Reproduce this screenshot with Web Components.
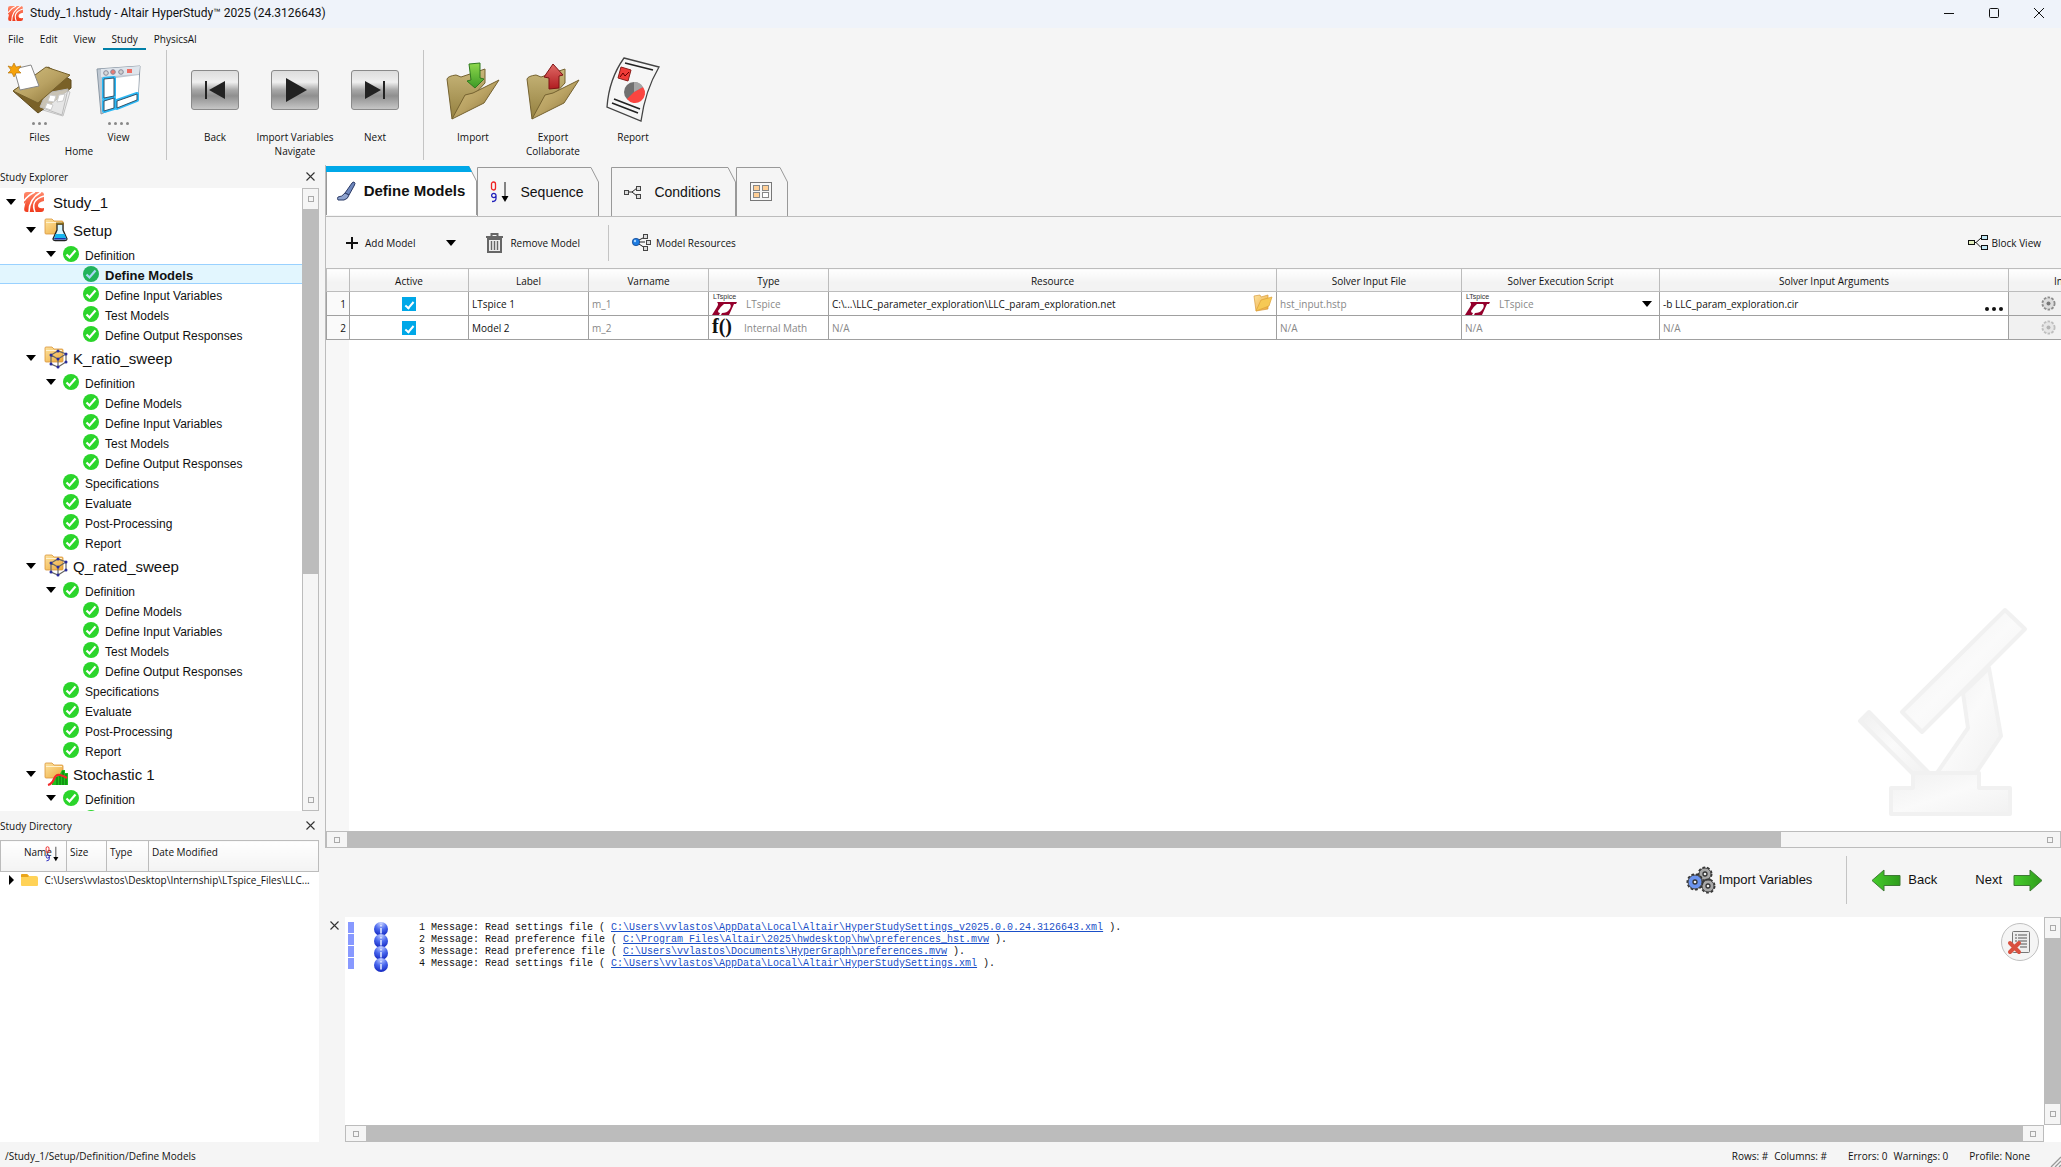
<!DOCTYPE html>
<html lang="en">
<head>
<meta charset="utf-8">
<title>Study_1.hstudy - Altair HyperStudy</title>
<style>
  html, body { height: 100%; margin: 0; }
  body {
    --bg: #f5f5f5;
    --line: #bcbcbc;
    --grid: #a0a0a0;
    --accent: #00a8e8;
    --ui: "Open Sans", "Segoe UI", sans-serif;
    --arial: "Liberation Sans", Arial, sans-serif;
    background: var(--bg);
    color: #111;
    font: 10px/14px var(--ui);
    overflow: hidden;
  }
</style>
</head>
<body>
<hs-app></hs-app>

<template id="app-template">
  <style>
    :host { display: flex; flex-direction: column; height: 100%; }
    main { flex: 1; display: flex; gap: 6px; min-height: 0; }
    aside { width: 319px; flex: none; display: flex; flex-direction: column; }
    section { flex: 1; min-width: 0; display: flex; flex-direction: column; }
    .tree { --head: 23px; flex: 646; }
    .dir { --head: 29px; flex: 331; }
    .work { flex: 1; min-height: 0; display: flex; flex-direction: column; border-left: 1px solid var(--line); }
  </style>
  <hs-titlebar>Study_1.hstudy - Altair HyperStudy™ 2025 (24.3126643)</hs-titlebar>
  <hs-menubar></hs-menubar>
  <hs-ribbon></hs-ribbon>
  <main>
    <aside>
      <hs-panel class="tree" heading="Study Explorer"><hs-tree></hs-tree></hs-panel>
      <hs-panel class="dir" heading="Study Directory"><hs-directory></hs-directory></hs-panel>
    </aside>
    <section>
      <div class="work">
        <hs-tabs></hs-tabs>
        <hs-toolbar></hs-toolbar>
        <hs-models></hs-models>
        <hs-scrollbar thumb="1434" rest="259"></hs-scrollbar>
      </div>
      <hs-nav></hs-nav>
      <hs-log></hs-log>
    </section>
  </main>
  <hs-status></hs-status>
</template>

<script>
// Gradients that the icons share
const defs = `
  <linearGradient id="gold" x1="0" y1="0" x2="1" y2="1"><stop offset="0" stop-color="#d3c080"/><stop offset=".5" stop-color="#b9a263"/><stop offset="1" stop-color="#846c30"/></linearGradient>
  <linearGradient id="gold2" x1="0" y1="0" x2="0" y2="1"><stop offset="0" stop-color="#c8b67a"/><stop offset="1" stop-color="#94803f"/></linearGradient>
  <linearGradient id="yel" x1="0" y1="0" x2="1" y2="1"><stop offset="0" stop-color="#fde3a0"/><stop offset="1" stop-color="#eda93a"/></linearGradient>
  <linearGradient id="red" x1="0" y1="0" x2="0" y2="1"><stop offset="0" stop-color="#e06a66"/><stop offset="1" stop-color="#b01c20"/></linearGradient>
  <linearGradient id="green" x1="0" y1="0" x2="0" y2="1"><stop offset="0" stop-color="#8fd84c"/><stop offset="1" stop-color="#3c9a26"/></linearGradient>
  <linearGradient id="go" x1="0" y1="0" x2="1" y2="0"><stop offset="0" stop-color="#46cc2c"/><stop offset="1" stop-color="#2f9c1c"/></linearGradient>
  <linearGradient id="key" x1="0" y1="0" x2="0" y2="1"><stop offset="0" stop-color="#dcdcdc"/><stop offset=".3" stop-color="#efefef"/><stop offset=".5" stop-color="#a8a8a8"/><stop offset=".65" stop-color="#8f8f8f"/><stop offset="1" stop-color="#c8c8c8"/></linearGradient>
  <radialGradient id="ball" cx=".5" cy=".1" r=".9"><stop offset="0" stop-color="#c5d0ff"/><stop offset=".5" stop-color="#4a68ee"/><stop offset="1" stop-color="#1226c0"/></radialGradient>
  <linearGradient id="altair" x1="0" y1="0" x2="0" y2="1"><stop offset="0" stop-color="#ff8a6c"/><stop offset="1" stop-color="#f03a1c"/></linearGradient>
  <linearGradient id="wm" x1="0" y1="0" x2="1" y2="1"><stop offset="0" stop-color="#f0f0f0"/><stop offset=".5" stop-color="#fafafa"/><stop offset="1" stop-color="#f1f1f1"/></linearGradient>`;

const folder = `<path d="M1 2q0-1 1-1h6l2 2h8q1 0 1 1v11q0 1-1 1H2q-1 0-1-1z" fill="url(#yel)" stroke="#d9953a" stroke-width=".8"/><path d="M2 4.500h16" stroke="#fff2cf"/>`;
const lattice = `<g fill="none" stroke="#666" stroke-width="1.200"><path d="M7 9l7-4 8 3-8 5zM7 9v9l7 3 8-5V8M14 13v8"/></g><g fill="#2a2c9c"><circle cx="7" cy="9" r="1.500"/><circle cx="14" cy="5" r="1.500"/><circle cx="22" cy="8" r="1.500"/><circle cx="14" cy="13" r="1.500"/><circle cx="7" cy="18" r="1.500"/><circle cx="14" cy="21" r="1.500"/><circle cx="22" cy="16" r="1.500"/></g>`;
const openFolder = `<path d="M1 20q1-3 9-4l5 2 24-8v14L6 60z" fill="url(#gold2)" stroke="#756230"/><path d="M6 60L19 36l8-2 26-13-15 23z" fill="url(#gold)" stroke="#756230"/>`;
const gear = (cx, cy, r, fill) => `<circle cx="${cx}" cy="${cy}" r="${r}" fill="none" stroke="#333" stroke-width="3" stroke-dasharray="2.500 1.700"/><circle cx="${cx}" cy="${cy}" r="${r}" fill="${fill}" stroke="#444"/><circle cx="${cx}" cy="${cy}" r="2" fill="#eee" stroke="#333" stroke-width="1.300"/>`;
const key = d => `<rect x=".5" y=".5" width="47" height="39" rx="2.500" fill="url(#key)" stroke="#8a8a8a"/>${d}`;

// name: [width, height, markup]
const icons = {
  altair: [20, 20, `<path d="M3 0h14q3 0 3 3v14q0 3-3 3H3q-3 0-3-3V3q0-3 3-3z" fill="url(#altair)"/><g fill="none" stroke="#fff" stroke-width="1.500"><path d="M0 9Q4 3 11 0"/><path d="M5 20Q5 7 17 0"/><path d="M11 20Q6 8 20 4"/></g><path d="M0 20V12l1.500-2Q0 16 0 20zM20 9q-6 1-6 4.500t6 2.500z" fill="#fff"/>`],
  files: [64, 54, `<path d="M36 22l26 7-7 24-27-8z" fill="#ececec" stroke="#c2c2c2"/><path d="M5 28L30 50 44 40 63 25V17L40 4z" fill="#7a6128" stroke="#5e4a1c"/><path d="M38 30l22-4-6 26-22-8z" fill="#e4e4e4" fill-opacity=".75" stroke="#bbb"/><path d="M42 32l6 1-2 6-6-1zm9 0l6-1-2 7-6 1zM39 40l6 2-2 5-6-2z" fill="#fff" stroke="#ccc"/><path d="M5 28L38 4l24 8-32 28z" fill="url(#gold)" stroke="#75602c"/><path d="M6 6l17-4 8 21-19 4z" fill="#fff" stroke="#888"/><path d="M6 0l2 4 5-1-3 4 3 3-5 0-2 4-2-4-4 0 3-3-3-4 4 1z" fill="#f7a30a" stroke="#b06c00" stroke-width=".6"/>`],
  view: [46, 50, `<path d="M1 4l43-3-2 32L5 49z" fill="#bfc8d2" stroke="#8b98a5"/><path d="M5 4l39-3-1 8-38 3z" fill="#dfe5ec"/><g stroke="#889"><circle cx="10" cy="8" r="2.300" fill="#d8d8d8"/><circle cx="17" cy="7" r="2.300" fill="#f07a70"/><circle cx="25" cy="7" r="2.300" fill="#cfcfcf"/></g><path d="M31 4h5v4h-5z" fill="#f06c62"/><path d="M20 13l23-3-1 22-34 14-1-32z" fill="#fff"/><g fill="#fff" stroke="#2bb8f5" stroke-width="4" stroke-linejoin="round"><path d="M8 14l10-1v18l-10 2zM8 36l10-3v10l-10 3zM21 36l20-7v6l-20 8z"/></g><g fill="#fff" stroke="#31536b"><path d="M8 14l10-1v18l-10 2zM8 36l10-3v10l-10 3zM21 36l20-7v6l-20 8z"/></g>`],
  back: [48, 40, key('<path d="M34 11v18L18 20z" fill="#222"/><path d="M15 11v18" stroke="#222" stroke-width="2"/>')],
  play: [48, 40, key('<path d="M15 8v24l21-12z" fill="#222"/>')],
  next: [48, 40, key('<path d="M14 11v18l16-9z" fill="#222"/><path d="M33 11v18" stroke="#222" stroke-width="2"/>')],
  import: [54, 62, `${openFolder}<path d="M23 5l11-1v15l4 1-9 9-8-7 4-1z" fill="url(#green)" stroke="#2f7a1e"/>`],
  export: [54, 62, `${openFolder}<path d="M27 5l10 11-4 1v12l-10 1V19l-5-1z" fill="url(#red)" stroke="#7d1214"/>`],
  report: [54, 66, `<path d="M18 1l35 9q-14 24-18 54L1 50Q3 22 18 1z" fill="#f6f6f6" stroke="#444" stroke-width="1.300"/><path d="M19 6l28 7M8 42l26 10M6 46l26 10" stroke="#222" stroke-width="1.600"/><path d="M15 10l10 3-3 11-10-3z" fill="#f03c38" stroke="#8b1d1b"/><path d="M14 20l3-4 2 3 4-4" fill="none" stroke="#600"/><circle cx="28" cy="35" r="10" fill="#707070"/><path d="M28 35l9-5a10 10 0 0 1-16 12z" fill="#fb4540"/><path d="M28 35V25a10 10 0 0 1 9 5z" fill="#a5a5a5"/>`],
  setup: [24, 24, `${folder}<path d="M13 6h6v6l4 9q0 1.500-2 1.500H11q-2 0-2-1.500l4-9z" fill="#d8f6ff" stroke="#222" stroke-width="1.300"/><path d="M11.500 16h9l2 5H10z" fill="#16b4ee"/><path d="M10.500 20h11l.5 1.500H10z" fill="#1c31a8"/><path d="M12 5.500h8" stroke="#8a6d1c" stroke-width="2"/>`],
  sweep: [24, 24, folder + lattice],
  stochastic: [24, 24, `${folder}<path d="M8 23v-4l4-4 4-3 2-4h3v3h3v12z" fill="#1fc01f"/><path d="M13 23v-8m3 8V12m3 11V9m3 14V12" stroke="#0b6e0b"/><path d="M4 23q4-1 6-6t6-4 7 3" fill="none" stroke="#f02a2a" stroke-width="2.200"/>`],
  ok: [16, 16, `<circle cx="8" cy="8" r="8" fill="#2bd52b"/><path d="M3.500 8.500l3 3 6-7" fill="none" stroke="#fff" stroke-width="2.200"/>`],
  oksel: [16, 16, `<circle cx="8" cy="8" r="8" fill="#21b35c"/><path d="M3.500 8.500l3 3 6-7" fill="none" stroke="#a9d6f5" stroke-width="2.200"/>`],
  down: [10, 6, '<path d="M0 0h10L5 6z" fill="#000"/>'],
  right: [5, 10, '<path d="M0 0v10l5-5z" fill="#000"/>'],
  close: [9, 9, '<path d="M.5.5l8 8m0-8l-8 8" stroke="#333" stroke-width="1.100"/>'],
  min: [10, 10, '<path d="M0 5.500h10" stroke="#111"/>'],
  max: [10, 10, '<rect x=".5" y=".5" width="9" height="9" rx="1" fill="none" stroke="#111"/>'],
  winclose: [10, 10, '<path d="M0 0l10 10M10 0L0 10" stroke="#111"/>'],
  brush: [20, 20, '<path d="M18 1q2 1 0 4l-5 9-4-2 7-10q1-1 2-1z" fill="#6e87bd" stroke="#2b3a66"/><path d="M9 12l4 2q-1 4-5 5H2q-1-2 0-3 4 0 7-4z" fill="#8ea3cf" stroke="#2b3a66"/>'],
  sort: [18, 22, '<g fill="none" stroke-width="1.300"><rect x="1.500" y="1" width="4" height="8" rx="2" stroke="#e22"/><path d="M6 14.500a2.200 2.200 0 1 1-4.400 0a2.200 2.200 0 1 1 4.400 0v3q0 3-4 3" stroke="#22b"/></g><path d="M15 1v16" stroke="#111"/><path d="M11.500 15h7L15 21z" fill="#000"/>'],
  cond: [18, 14, '<path d="M4 7h4l5-4M8 7l5 4" fill="none" stroke="#222"/><g fill="#ddd" stroke="#444"><rect x=".5" y="5.500" width="4" height="4"/><rect x="12.500" y="1.500" width="4" height="4"/><rect x="12.500" y="9.500" width="4" height="4"/></g>'],
  grid: [22, 19, '<rect x=".5" y=".5" width="21" height="18" fill="#f7f7f7" stroke="#777"/><g fill="#ffcf96" stroke="#888"><rect x="3.500" y="3.500" width="6" height="5"/><rect x="12.500" y="3.500" width="6" height="5"/><rect x="3.500" y="10.500" width="6" height="5"/><rect x="12.500" y="10.500" width="6" height="5" fill="#fff"/></g>'],
  plus: [12, 12, '<path d="M6 0v12M0 6h12" stroke="#111" stroke-width="2"/>'],
  trash: [17, 20, '<path d="M2 6h13v13H2z" fill="#ededed" stroke="#666" stroke-width="2"/><path d="M0 4h17M5.500 4V1h6v3" fill="none" stroke="#666" stroke-width="2"/><path d="M5.500 8v9m3-9v9m3-9v9" stroke="#666" stroke-width="1.400"/>'],
  resources: [19, 17, '<path d="M5 8h8M7 6l6-3M7 10l6 4" stroke="#222"/><g fill="#ddd" stroke="#444"><rect x="11.500" y=".5" width="4" height="4"/><rect x="14.500" y="6.500" width="4" height="4"/><rect x="11.500" y="12.500" width="4" height="4"/></g><circle cx="4" cy="8" r="3.700" fill="#1d7be0" stroke="#0d3f8a" stroke-width=".7"/><circle cx="3" cy="7" r="1.200" fill="#a8d4ff"/>'],
  block: [20, 15, '<path d="M6 7.500h2l5-4.500M8 7.500l5 5" fill="none" stroke="#111"/><rect x=".5" y="5.500" width="6" height="4" fill="#e3efbd" stroke="#111"/><rect x="13.500" y=".5" width="6" height="4" fill="#c2e8f5" stroke="#111"/><rect x="13.500" y="10.500" width="6" height="4" fill="#c2e8f5" stroke="#111"/>'],
  ltspice: [26, 23, '<text x="1" y="7" font-family="Liberation Sans" font-size="7" fill="#333">LTspice</text><path d="M5 10h20l-1 2h-2l-5 11H9l1-2q5 0 7-3 3-4 1-6h-6q-4 3-6 7 0 2 2 2l-1 2H0l5-8q2-3 0-5z" fill="#94002c"/>'],
  fx: [24, 22, '<text x="0" y="16" font-family="Liberation Serif" font-weight="bold" font-size="20" fill="#111">f()</text>'],
  openyellow: [20, 19, '<path d="M1 3l6-1 1 2 7-2v14L3 18z" fill="url(#yel)" stroke="#d89b3c" stroke-width=".7"/><path d="M3 18L8 7l11-3-3 9z" fill="#f6c955" stroke="#dda038" stroke-width=".7"/>'],
  dir: [17, 14, '<path d="M0 3q0-2 2-2h4l2 2h7q2 0 2 2v7q0 1-1 1H1q-1 0-1-1z" fill="#ffd257"/><path d="M0 4V2q0-1 1-1h5l2 2-1 1z" fill="#eaa51b"/>'],
  cog: [15, 15, '<circle cx="7.500" cy="7.500" r="6" fill="#d6d6d6" stroke="#8d8d8d" stroke-width="2" stroke-dasharray="2.500 1.300"/><circle cx="7.500" cy="7.500" r="5" fill="#ddd"/><circle cx="7.500" cy="7.500" r="2" fill="#777"/>'],
  gears: [30, 29, gear(19, 8, 6, '#a8a8a8') + gear(22, 20, 6, '#a8a8a8') + gear(9, 16, 7, '#6a93ee')],
  left: [30, 23, '<path d="M1 11.500L13 1v5.500h16v10H13V22z" fill="url(#go)" stroke="#3f7a35"/>'],
  fwd: [30, 23, '<path d="M29 11.500L17 1v5.500H1v10h16V22z" fill="url(#go)" stroke="#3f7a35"/>'],
  info: [14, 14, '<circle cx="7" cy="7" r="7" fill="url(#ball)"/><path d="M7 3v1.500M7 6v5.500" stroke="#dfe6ff" stroke-width="1.600"/>'],
  clear: [22, 22, '<rect x="4.500" y=".5" width="17" height="21" rx="1" fill="#eee" stroke="#777"/><path d="M7 4h2m1 0h9M7 7h2m1 0h9M7 10h2m1 0h9M10 13h9M12 16h7" stroke="#555"/><path d="M2 12l9 9m0-9l-9 9" stroke="#d9503f" stroke-width="4" stroke-linecap="round"/>'],
  grip: [10, 10, '<path d="M0 10L10 0M4 10l6-6M8 10l2-2" stroke="#999" stroke-width="1.300"/>'],
  microscope: [170, 210, '<g fill="url(#wm)" stroke="#f1f1f1" stroke-width="4" stroke-linejoin="round"><path d="M131 61l12 68-25 37H79l31-45-5-35z"/><path d="M11 105l61 62H55L2 114z"/><path d="M147 3l20 19L64 125l-20-20z"/><path d="M33 181h22v-15h66v15h31v26H33z"/></g>']
};

class HsIcon extends HTMLElement {
  connectedCallback() {
    const [w, h, body] = icons[this.getAttribute('name')];
    const size = this.getAttribute('size') || w;
    this.attachShadow({ mode: 'open' }).innerHTML = `
      <style>:host { display: inline-flex; flex: none; } svg { display: block; overflow: visible; }</style>
      <svg width="${size}" height="${Math.round(size * h / w)}" viewBox="0 0 ${w} ${h}" aria-hidden="true">
        <defs>${defs}</defs>${body}
      </svg>`;
  }
}

// Base for the elements whose markup is a fixed string
class HsElement extends HTMLElement {
  connectedCallback() {
    this.attachShadow({ mode: 'open' }).innerHTML = `
      <style>
        :host, * { box-sizing: border-box; }
        button, select { font: inherit; color: inherit; background: none; border: 0; margin: 0; padding: 0; }
      </style>${this.render()}`;
  }
}

class HsTitlebar extends HsElement {
  render() {
    return `
      <style>
        :host { display: flex; align-items: center; flex: none; height: 28px; padding: 0 17px 2px 8px; gap: 7px; background: #eff3fa; font: 12px/16px Roboto, sans-serif; }
        .title { flex: 1; }
        .win { display: flex; gap: 35px; }
        button { display: flex; }
      </style>
      <hs-icon name="altair" size="15"></hs-icon>
      <span class="title"><slot></slot></span>
      <div class="win">
        <button aria-label="Minimize"><hs-icon name="min"></hs-icon></button>
        <button aria-label="Maximize"><hs-icon name="max"></hs-icon></button>
        <button aria-label="Close"><hs-icon name="winclose"></hs-icon></button>
      </div>`;
  }
}

class HsMenubar extends HsElement {
  render() {
    const items = ['File', 'Edit', 'View', 'Study', 'PhysicsAI'];
    return `
      <style>
        :host { display: flex; flex: none; height: 22px; }
        button { padding: 2px 8px 0; border-bottom: 2px solid transparent; }
        button.on { border-color: #0080a8; }
      </style>
      ${items.map(t => `<button class="${t === 'Study' ? 'on' : ''}">${t}</button>`).join('')}`;
  }
}

class HsRibbon extends HsElement {
  render() {
    const group = (name, items) => `
      <div class="group ${name.toLowerCase()}"><div class="items">${items.map(([icon, text, dots]) => `
        <button><span class="pic"><hs-icon name="${icon}"></hs-icon></span><span class="dots">${'<i></i>'.repeat(dots || 0)}</span>${text}</button>`).join('')}
      </div>${name}</div>`;
    return `
      <style>
        :host { display: flex; flex: none; height: 115px; }
        .group { display: flex; flex-direction: column; align-items: center; height: 110px; padding: 0 8px; border-right: 1px solid #c4c4c4; }
        .home { padding: 0 8px 0 0; }
        .home button { width: 79px; }
        .collaborate { border: 0; padding: 0 9px; }
        .items { display: flex; }
        button { width: 80px; display: flex; flex-direction: column; align-items: center; }
        .pic { height: 72px; display: flex; align-items: center; padding-top: 8px; }
        .dots { height: 8px; display: flex; gap: 3px; }
        i { width: 3px; height: 3px; border-radius: 50%; background: #888; }
      </style>
      ${group('Home', [['files', 'Files', 3], ['view', 'View', 4]])}
      ${group('Navigate', [['back', 'Back'], ['play', 'Import Variables'], ['next', 'Next']])}
      ${group('Collaborate', [['import', 'Import'], ['export', 'Export'], ['report', 'Report']])}`;
  }
}

class HsPanel extends HsElement {
  render() {
    return `
      <style>
        :host { display: flex; flex-direction: column; min-height: 0; }
        header { display: flex; align-items: center; justify-content: space-between; height: var(--head); flex: none; }
        button { display: flex; padding: 4px; }
        .body { flex: 1; min-height: 0; overflow: hidden; background: #fff; }
      </style>
      <header>${this.getAttribute('heading')}<button aria-label="Close"><hs-icon name="close"></hs-icon></button></header>
      <div class="body"><slot></slot></div>`;
  }
}

class HsScrollbar extends HsElement {
  render() {
    const v = this.hasAttribute('vertical');
    return `
      <style>
        :host { display: flex; flex: none; flex-direction: ${v ? 'column' : 'row'}; ${v ? 'width' : 'height'}: 17px; border: 1px solid var(--line); background: var(--bg); }
        button { flex: none; width: ${v ? 'auto' : '20px'}; height: ${v ? '20px' : 'auto'}; display: flex; align-items: center; justify-content: center; }
        button::before { content: ""; width: 6px; height: 6px; border: 1px solid #aaa; box-sizing: border-box; }
        .thumb { flex: ${this.getAttribute('thumb') || 1}; background: var(--line); }
        .rest { flex: ${this.getAttribute('rest') || 0}; }
      </style>
      <button aria-label="Scroll back"></button><div class="thumb"></div><div class="rest"></div><button aria-label="Scroll on"></button>`;
  }
}

const steps = ['Define Models', 'Define Input Variables', 'Test Models', 'Define Output Responses'];
const sweep = name => [
  [1, 'sweep', name, true], [2, 'ok', 'Definition', true], ...steps.map(s => [3, 'ok', s]),
  ...['Specifications', 'Evaluate', 'Post-Processing', 'Report'].map(s => [2, 'ok', s])
];
const nodes = [
  [0, 'altair', 'Study_1', true],
  [1, 'setup', 'Setup', true], [2, 'ok', 'Definition', true], ...steps.map((s, i) => [3, i ? 'ok' : 'oksel', s]),
  ...sweep('K_ratio_sweep'),
  ...sweep('Q_rated_sweep'),
  [1, 'stochastic', 'Stochastic 1', true], [2, 'ok', 'Definition', true], [3, 'ok', '']
];

class HsTree extends HsElement {
  render() {
    return `
      <style>
        :host { display: flex; height: 100%; overflow: hidden; }
        ul { flex: 1; margin: 0; padding: 0; list-style: none; font: 12px/16px var(--arial); }
        li { display: flex; align-items: center; height: 20px; white-space: nowrap; padding-left: calc(6px + var(--level) * 20px); }
        .arrow { width: 10px; display: flex; }
        .pic { display: flex; width: 29px; padding-left: 7px; }
        .label { padding-top: 3px; }
        .top { height: 28px; font-size: 15px; }
        .top .pic { width: 37px; padding-left: 8px; }
        .top .label { padding-top: 2px; }
        .selected { font-weight: bold; font-size: 13px; background: #e2f6fe; border: solid #99d1ff; border-width: 1px 0; }
      </style>
      <ul role="tree">${nodes.map(([level, icon, text, open]) => `
        <li role="treeitem" style="--level:${level}" class="${level < 2 ? 'top' : ''} ${icon === 'oksel' ? 'selected' : ''}">
          <span class="arrow">${open ? '<hs-icon name="down"></hs-icon>' : ''}</span>
          <span class="pic"><hs-icon name="${icon}"></hs-icon></span><span class="label">${text}</span>
        </li>`).join('')}
      </ul>
      <hs-scrollbar vertical thumb="365" rest="216"></hs-scrollbar>`;
  }
}

class HsDirectory extends HsElement {
  render() {
    return `
      <style>
        :host { display: block; }
        table { width: 100%; border-collapse: collapse; table-layout: fixed; }
        th { height: 31px; padding: 0 0 9px 3px; text-align: left; font-weight: normal; border: 1px solid var(--line); background: linear-gradient(#fff, #f3f3f3); }
        .name { width: 66px; padding-left: 23px; }
        .size { width: 40px; }
        .type { width: 42px; }
        .sortable { display: flex; align-items: center; height: 14px; }
        .sortable hs-icon { margin-left: -7px; padding-top: 4px; }
        td { height: 16px; padding: 0; }
        .path { display: flex; align-items: center; gap: 7px; padding: 0 8px; white-space: nowrap; }
      </style>
      <table>
        <tr><th class="name"><span class="sortable">Name<hs-icon name="sort" size="13"></hs-icon></span></th><th class="size">Size</th><th class="type">Type</th><th>Date Modified</th></tr>
        <tr><td colspan="4"><span class="path"><hs-icon name="right"></hs-icon><hs-icon name="dir"></hs-icon><span>C:\\Users\\vvlastos\\Desktop\\Internship\\LTspice_Files\\LLC...</span></span></td></tr>
      </table>`;
  }
}

class HsTabs extends HsElement {
  render() {
    const tab = (cls, w, icon, text) => `
      <button role="tab" class="${cls}" style="width:${w}px" aria-label="${text || 'Grid'}">
        <svg class="edge" viewBox="0 0 ${w} 49" width="${w}" height="49"><path d="M.5 49V.5H${w - 8}L${w - 0.5} 15V49"/>${cls === 'on' ? `<path class="bar" d="M0 0H${w - 8}L${w - 5} 6H0z"/>` : ''}</svg>
        <hs-icon name="${icon}"></hs-icon>${text ? `<span>${text}</span>` : ''}
      </button>`;
    return `
      <style>
        :host { display: flex; align-items: flex-end; flex: none; height: 52px; border-bottom: 1px solid var(--line); }
        button { position: relative; display: flex; align-items: center; justify-content: center; gap: 12px; height: 49px; padding-right: 2px; font: 14px/16px var(--arial); }
        .edge { position: absolute; inset: 0; z-index: -1; fill: var(--bg); stroke: #999; }
        .on { height: 51px; gap: 8px; font-weight: bold; font-size: 15px; }
        .on .edge { fill: #fff; height: 51px; }
        .bar { fill: var(--accent); stroke: none; }
        .gap { margin-left: 12px; }
      </style>
      ${tab('on', 151, 'brush', 'Define Models')}
      ${tab('', 122, 'sort', 'Sequence')}
      ${tab('gap', 125, 'cond', 'Conditions')}
      ${tab('', 52, 'grid', '')}`;
  }
}

class HsToolbar extends HsElement {
  render() {
    return `
      <style>
        :host { display: flex; align-items: center; flex: none; height: 51px; padding: 0 20px; }
        button { display: flex; align-items: center; gap: 7px; }
        .more { padding: 0 30px 0 31px; }
        .split { height: 36px; width: 1px; margin: 0 23px 0 28px; background: #c4c4c4; }
        .model { gap: 5px; }
        .end { margin-left: auto; gap: 4px; }
      </style>
      <button><hs-icon name="plus"></hs-icon>Add Model</button>
      <button class="more" aria-label="More models"><hs-icon name="down"></hs-icon></button>
      <button><hs-icon name="trash"></hs-icon>Remove Model</button>
      <div class="split"></div>
      <button class="model"><hs-icon name="resources"></hs-icon>Model Resources</button>
      <button class="end"><hs-icon name="block"></hs-icon>Block View</button>`;
  }
}

class HsModels extends HsElement {
  render() {
    const cols = [['Active', 119], ['Label', 120], ['Varname', 120], ['Type', 120], ['Resource', 448], ['Solver Input File', 185], ['Solver Execution Script', 198], ['Solver Input Arguments', 349], ['In', 100]];
    return `
      <style>
        :host { flex: 1; min-height: 0; overflow: hidden; display: flex; flex-direction: column; background: linear-gradient(90deg, #f7f7f7 23px, #fff 23px); }
        table { width: 1782px; flex: none; border-collapse: collapse; table-layout: fixed; background: #fff; }
        th, td { padding: 0 3px; border: 1px solid var(--grid); white-space: nowrap; font-weight: normal; }
        thead th { height: 23px; padding-top: 1px; border-color: var(--line); background: linear-gradient(#fff, #f3f3f3 60%); }
        tbody th { background: #fafafa; text-align: right; }
        td { height: 24px; }
        .dim { color: #888; }
        .check { text-align: center; }
        input { appearance: none; width: 14px; height: 14px; margin: 0; background: var(--accent); vertical-align: middle; display: inline-grid; place-items: center; }
        input::before { content: ""; width: 3px; height: 7px; border: solid #fff; border-width: 0 2px 2px 0; transform: rotate(40deg); box-sizing: content-box; }
        .cell { display: flex; align-items: center; gap: 8px; height: 23px; }
        .cell.apart { justify-content: space-between; }
        select { flex: 1; appearance: none; }
        .drop { padding-right: 4px; }
        .tool { padding: 0 8px 0 0; background: #f1f1f1; text-align: center; }
        .tool button { display: flex; width: 100%; padding-left: 32px; }
        .faded { opacity: .5; }
        .dots { align-self: flex-end; display: flex; gap: 3px; padding: 0 2px 4px; }
        .dots i { width: 4px; height: 4px; border-radius: 50%; background: #111; }
        .watermark { flex: 1; min-height: 0; display: flex; justify-content: flex-end; align-items: flex-end; padding: 0 33px 14px; }
      </style>
      <table>
        <colgroup><col style="width:23px">${cols.map(c => `<col style="width:${c[1]}px">`).join('')}</colgroup>
        <thead><tr><th></th>${cols.map(c => `<th scope="col">${c[0]}</th>`).join('')}</tr></thead>
        <tbody>
          <tr>
            <th scope="row">1</th>
            <td class="check"><input type="checkbox" checked aria-label="LTspice 1 active"></td>
            <td>LTspice 1</td><td class="dim">m_1</td>
            <td class="dim"><span class="cell"><hs-icon name="ltspice"></hs-icon>LTspice</span></td>
            <td><span class="cell apart">C:\\...\\LLC_parameter_exploration\\LLC_param_exploration.net<button aria-label="Browse"><hs-icon name="openyellow"></hs-icon></button></span></td>
            <td class="dim">hst_input.hstp</td>
            <td class="dim"><span class="cell drop"><hs-icon name="ltspice"></hs-icon><select aria-label="Solver Execution Script"><option>LTspice</option></select><hs-icon name="down"></hs-icon></span></td>
            <td><span class="cell apart">-b LLC_param_exploration.cir<button class="dots" aria-label="Edit arguments"><i></i><i></i><i></i></button></span></td>
            <td class="tool"><button aria-label="Settings"><hs-icon name="cog"></hs-icon></button></td>
          </tr>
          <tr>
            <th scope="row">2</th>
            <td class="check"><input type="checkbox" checked aria-label="Model 2 active"></td>
            <td>Model 2</td><td class="dim">m_2</td>
            <td class="dim"><span class="cell"><hs-icon name="fx"></hs-icon>Internal Math</span></td>
            <td class="dim">N/A</td><td class="dim">N/A</td><td class="dim">N/A</td><td class="dim">N/A</td>
            <td class="tool"><button class="faded" aria-label="Settings" disabled><hs-icon name="cog"></hs-icon></button></td>
          </tr>
        </tbody>
      </table>
      <div class="watermark"><hs-icon name="microscope"></hs-icon></div>`;
  }
}

class HsNav extends HsElement {
  render() {
    return `
      <style>
        :host { display: flex; align-items: center; justify-content: flex-end; flex: none; height: 69px; padding: 0 18px 5px 0; font: 13px/16px var(--arial); }
        button { display: flex; align-items: center; gap: 3px; }
        .split { width: 1px; height: 48px; margin: 0 24px 0 34px; background: #c4c4c4; }
        .arrow { gap: 7px; }
        .arrow + .arrow { margin-left: 38px; gap: 11px; }
      </style>
      <button><hs-icon name="gears"></hs-icon>Import Variables</button>
      <div class="split"></div>
      <button class="arrow"><hs-icon name="left"></hs-icon>Back</button>
      <button class="arrow">Next<hs-icon name="fwd"></hs-icon></button>`;
  }
}

const messages = [
  ['settings', 'C:\\Users\\vvlastos\\AppData\\Local\\Altair\\HyperStudySettings_v2025.0.0.24.3126643.xml'],
  ['preference', 'C:\\Program Files\\Altair\\2025\\hwdesktop\\hw\\preferences_hst.mvw'],
  ['preference', 'C:\\Users\\vvlastos\\Documents\\HyperGraph\\preferences.mvw'],
  ['settings', 'C:\\Users\\vvlastos\\AppData\\Local\\Altair\\HyperStudySettings.xml']
];

class HsLog extends HsElement {
  render() {
    return `
      <style>
        :host { display: grid; grid-template: 208px 17px / 20px 1fr 17px; flex: none; }
        .close { display: flex; align-self: start; padding: 4px 5px; }
        .view { display: flex; justify-content: space-between; align-items: flex-start; background: #fff; padding: 5px 5px 0 3px; overflow: hidden; }
        ol { margin: 0; padding: 0; list-style: none; font: 10px/12px "Liberation Mono", "Courier New", monospace; }
        li { display: flex; height: 12px; white-space: pre; }
        .bar { width: 6px; background: #8899ff; margin-right: 20px; border-bottom: 1px solid #fff; }
        .no { width: 37px; text-align: right; margin-right: 6px; }
        a { color: #1a4fc8; }
        .clear { display: flex; align-items: center; justify-content: center; width: 38px; height: 38px; margin-top: 1px; padding-right: 3px; border: 1px solid #c0c0c0; border-radius: 50%; background: var(--bg); }
        .corner { background: #fff; }
        .across { grid-column: 2; }
      </style>
      <button class="close" aria-label="Close"><hs-icon name="close"></hs-icon></button>
      <div class="view">
        <ol>${messages.map(([kind, path], i) => `
          <li><span class="bar"></span><hs-icon name="info"></hs-icon><span class="no">${i + 1}</span><span>Message: Read ${kind} file ( <a href="#">${path}</a> ).</span></li>`).join('')}
        </ol>
        <button class="clear" aria-label="Clear messages"><hs-icon name="clear"></hs-icon></button>
      </div>
      <hs-scrollbar vertical></hs-scrollbar>
      <hs-scrollbar class="across"></hs-scrollbar>
      <div class="corner"></div>`;
  }
}

class HsStatus extends HsElement {
  render() {
    return `
      <style>
        :host { display: flex; align-items: center; flex: none; height: 25px; padding: 2px 0 0 5px; white-space: nowrap; }
        .path { flex: 1; }
        .group { display: flex; gap: 6px; margin-right: 21px; }
        hs-icon { align-self: flex-end; }
      </style>
      <span class="path">/Study_1/Setup/Definition/Define Models</span>
      <div class="group"><span>Rows: #</span><span>Columns: #</span></div>
      <div class="group"><span>Errors: 0</span><span>Warnings: 0</span></div>
      <div class="group">Profile: None</div>
      <hs-icon name="grip"></hs-icon>`;
  }
}

class HsApp extends HTMLElement {
  connectedCallback() {
    const template = document.getElementById('app-template');
    this.attachShadow({ mode: 'open' }).appendChild(document.importNode(template.content, true));
  }
}

customElements.define('hs-icon', HsIcon);
customElements.define('hs-titlebar', HsTitlebar);
customElements.define('hs-menubar', HsMenubar);
customElements.define('hs-ribbon', HsRibbon);
customElements.define('hs-panel', HsPanel);
customElements.define('hs-scrollbar', HsScrollbar);
customElements.define('hs-tree', HsTree);
customElements.define('hs-directory', HsDirectory);
customElements.define('hs-tabs', HsTabs);
customElements.define('hs-toolbar', HsToolbar);
customElements.define('hs-models', HsModels);
customElements.define('hs-nav', HsNav);
customElements.define('hs-log', HsLog);
customElements.define('hs-status', HsStatus);
customElements.define('hs-app', HsApp);
</script>
</body>
</html>
